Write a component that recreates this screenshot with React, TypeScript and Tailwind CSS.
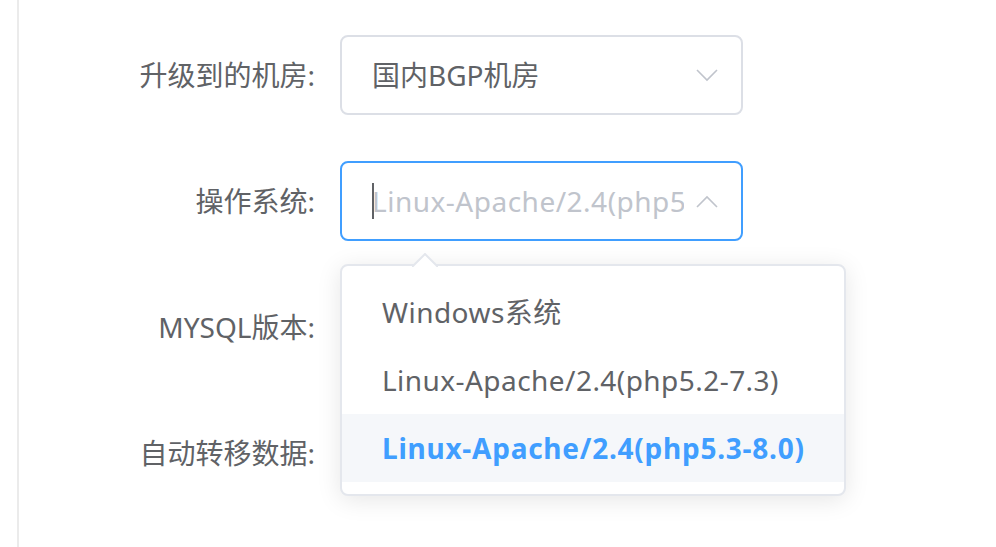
import React from "react";

const font = { fontFamily: '"Noto Sans", "Noto Sans CJK SC", sans-serif' };

function Chevron({ up }: { up?: boolean }) {
  return (
    <svg width="22" height="13" viewBox="0 0 22 13" className="shrink-0">
      <polyline
        points={up ? "1,12 11,2 21,12" : "1,1 11,11 21,1"}
        fill="none"
        stroke="#c0c4cc"
        strokeWidth="1.6"
      />
    </svg>
  );
}

function Row({ label, children }: { label: string; children?: React.ReactNode }) {
  return (
    <div className="flex h-[80px] items-center">
      <div className="w-[321px] pr-[25px] text-right text-[28px] text-[#606266]">{label}</div>
      <div className="relative h-[80px] w-[403px]">{children}</div>
    </div>
  );
}

const options = [
  { label: "Windows系统", active: false },
  { label: "Linux-Apache/2.4(php5.2-7.3)", active: false },
  { label: "Linux-Apache/2.4(php5.3-8.0)", active: true },
];

export default function App() {
  return (
    <div className="flex h-[547px] w-[996px] overflow-hidden bg-white" style={font}>
      <div className="w-[17px]" />
      <div className="w-[2px] bg-[#ebebeb]" />
      <div className="flex flex-col gap-[46px] pt-[35px]">
        <Row label="升级到的机房:">
          <div className="flex h-full items-center justify-between rounded-[8px] border-2 border-[#dcdfe6] pl-[30px] pr-[23px]">
            <span className="text-[28px] text-[#606266]">国内BGP机房</span>
            <Chevron />
          </div>
        </Row>
        <Row label="操作系统:">
          <div className="relative z-10 flex h-full items-center justify-between rounded-[8px] border-2 border-[#409eff] bg-white pl-[30px] pr-[23px]">
            <div className="relative flex w-[312px] items-center overflow-hidden whitespace-nowrap">
              <span className="absolute left-0 h-[36px] w-[2px] bg-[#606266]" />
              <span className="text-[28px] tracking-[0.5px] text-[#c0c4cc]">Linux-Apache/2.4(php5.3-8.0)</span>
            </div>
            <Chevron up />
          </div>
          <div className="absolute left-0 top-[103px] z-20 w-[506px] rounded-[8px] border-2 border-[#e4e7ed] bg-white py-[12px] shadow-[0_4px_24px_rgba(0,0,0,0.1)]">
            <svg width="26" height="14" viewBox="0 0 26 14" className="absolute left-[70px] top-[-13px]">
              <polygon points="0,14 13,1 26,14" fill="white" />
              <polyline points="0,14 13,1 26,14" fill="none" stroke="#e4e7ed" strokeWidth="2" />
            </svg>
            {options.map((o) => (
              <div
                key={o.label}
                className={
                  o.active
                    ? "flex h-[68px] items-center bg-[#f5f7fa] pl-[40px] text-[28px] font-bold tracking-[0.75px] text-[#409eff]"
                    : "flex h-[68px] items-center pl-[40px] text-[28px] tracking-[0.45px] text-[#606266]"
                }
              >
                {o.label}
              </div>
            ))}
          </div>
        </Row>
        <Row label="MYSQL版本:" />
        <Row label="自动转移数据:" />
      </div>
    </div>
  );
}
